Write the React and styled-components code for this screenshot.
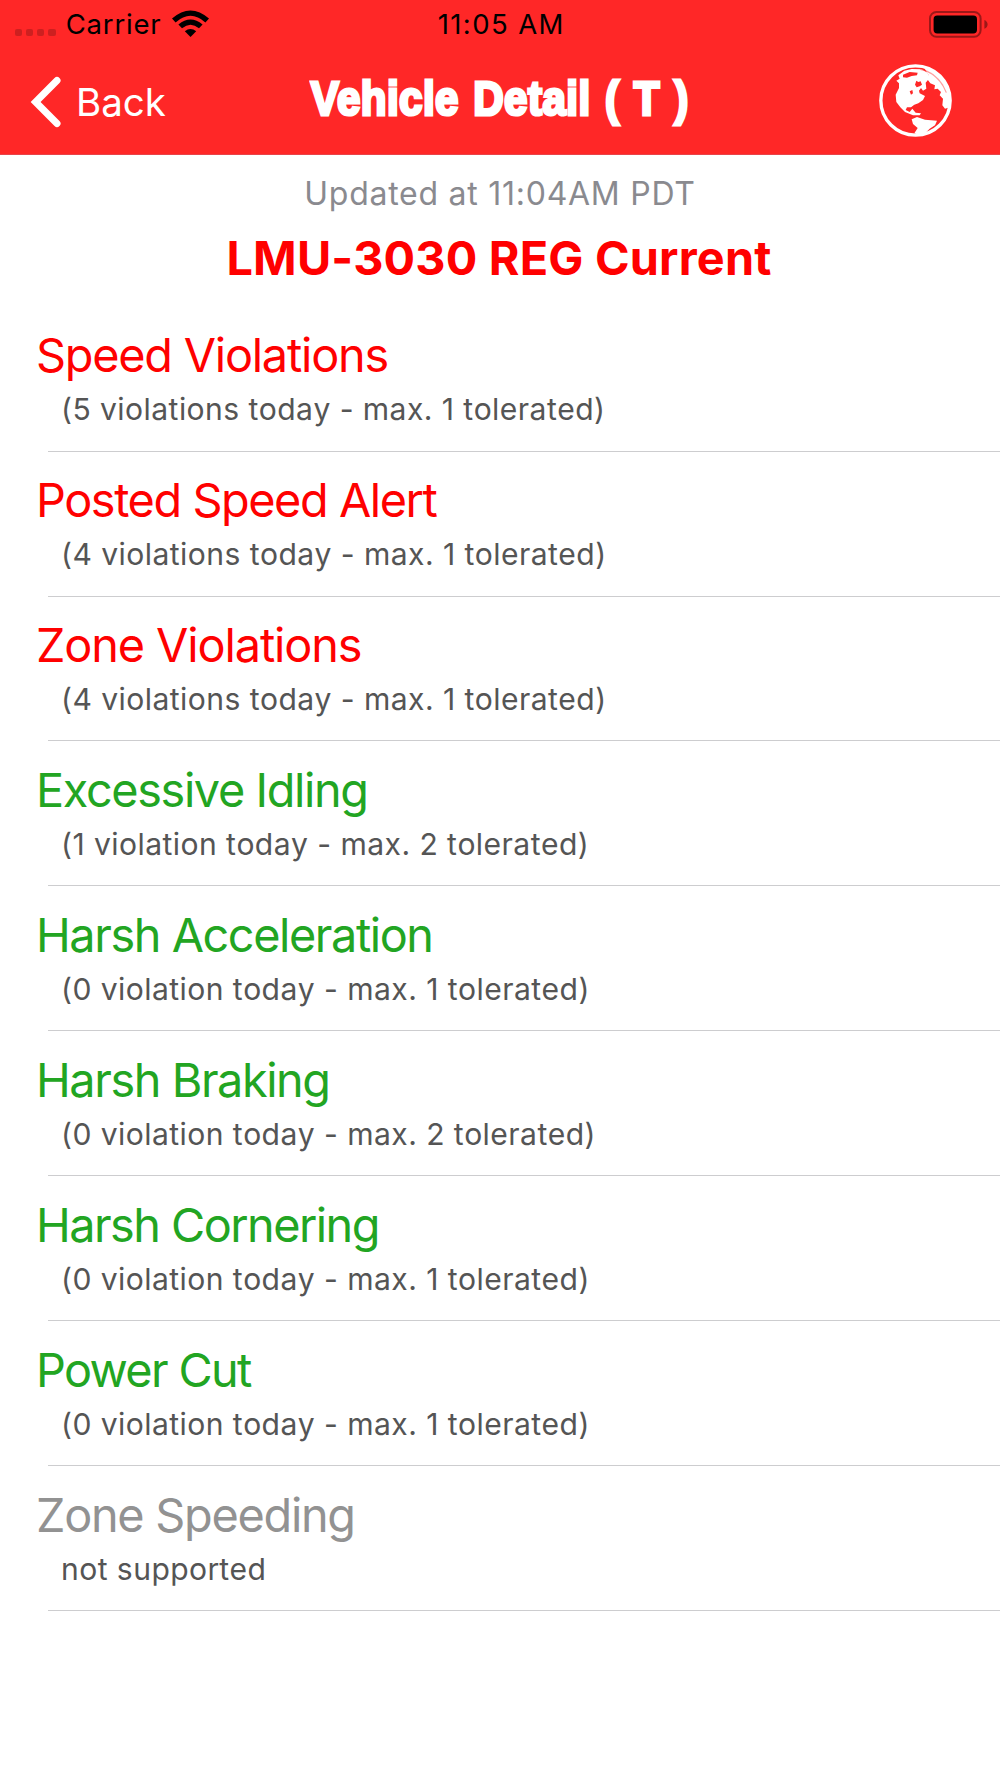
import React from 'react'
import styled, { createGlobalStyle } from 'styled-components'

const GlobalStyle = createGlobalStyle`
  * {
    box-sizing: border-box;
  }
  body {
    margin: 0;
    background: #fff;
    font-family: Inter, 'Liberation Sans', sans-serif;
  }
`
const Screen = styled.div`
  width: 1000px;
  height: 1778px;
  background: #fff;
  overflow: hidden;
`
const Header = styled.header`
  height: 155px;
  background: #ff2727;
  border-bottom: 1px solid #e8444a;
`
const StatusBar = styled.div`
  display: grid;
  grid-template-columns: 1fr auto 1fr;
  align-items: center;
  height: 48px;
  padding: 0 12px 0 14.5px;
  color: #000;
  font-size: 27.5px;
  line-height: 48px;
`
const StatusLeft = styled.div`
  display: flex;
  align-items: center;
`
const Signal = styled.div`
  display: flex;
  gap: 4px;
  margin: 17px 10px 0 0;
`
const SignalDot = styled.span`
  width: 7.3px;
  height: 7px;
  border-radius: 2px;
  background: #cd2020;
`
const Carrier = styled.span`
  letter-spacing: 0.8px;
  margin-right: 11px;
`
const Time = styled.span`
  letter-spacing: 1.4px;
`
const StatusRight = styled.div`
  display: flex;
  justify-content: flex-end;
`
const NavBar = styled.nav`
  display: grid;
  grid-template-columns: 1fr auto 1fr;
  align-items: center;
  height: 106px;
  padding: 0 30px;
  color: #fff;
`
const BackButton = styled.a`
  display: flex;
  align-items: center;
  gap: 13px;
  padding-top: 2px;
  font-size: 38.5px;
  line-height: 50px;
`
const TitleBox = styled.div`
  width: 380px;
  display: flex;
  justify-content: center;
  padding-bottom: 6px;
`
const NavTitle = styled.h1`
  margin: 0;
  font-family: 'Liberation Sans', sans-serif;
  font-size: 48.5px;
  font-weight: 700;
  line-height: 60px;
  letter-spacing: 0.5px;
  word-spacing: 2.6px;
  white-space: nowrap;
  -webkit-text-stroke: 3.2px #fff;
  transform: scaleX(0.868);
`
const GlobeButton = styled.a`
  display: flex;
  justify-content: flex-end;
  padding: 0 18px 1px 0;
`
const Summary = styled.section`
  height: 151px;
  padding-top: 18px;
  text-align: center;
`
const Updated = styled.p`
  margin: 0;
  color: #8a8a8f;
  font-size: 32px;
  line-height: 41px;
  letter-spacing: 0.74px;
`
const VehicleName = styled.h2`
  margin: 15px 0 0;
  color: #ff0000;
  font-size: 46.8px;
  font-weight: 700;
  line-height: 58px;
  letter-spacing: 0.2px;
  padding-right: 2px;
`
const List = styled.ul`
  margin: 0;
  padding: 0;
  list-style: none;
`
const ListItem = styled.li`
  height: 144.95px;
  padding: 22.4px 0 0 36px;
`
const ItemTitle = styled.h3`
  margin: 0;
  color: ${({ $color }) => $color};
  font-size: 46.8px;
  font-weight: 400;
  line-height: 54px;
  letter-spacing: ${({ $spacing }) => $spacing}px;
`
const ItemDetail = styled.p`
  margin: 9px 0 0 25px;
  color: #555;
  font-size: 30.1px;
  font-kerning: none;
  line-height: 36px;
  letter-spacing: 0.43px;
`
const Divider = styled.div`
  height: 1px;
  margin: 23.2px 0 0 12px;
  background: #cdcdcf;
`

const RED = '#ff0000'
const GREEN = '#22a522'
const GRAY = '#929292'

const items = [
  { title: 'Speed Violations', detail: '(5 violations today - max. 1 tolerated)', color: RED, spacing: -1.22 },
  { title: 'Posted Speed Alert', detail: '(4 violations today - max. 1 tolerated)', color: RED, spacing: -1.42 },
  { title: 'Zone Violations', detail: '(4 violations today - max. 1 tolerated)', color: RED, spacing: -1.1 },
  { title: 'Excessive Idling', detail: '(1 violation today - max. 2 tolerated)', color: GREEN, spacing: -1.36 },
  { title: 'Harsh Acceleration', detail: '(0 violation today - max. 1 tolerated)', color: GREEN, spacing: -1.42 },
  { title: 'Harsh Braking', detail: '(0 violation today - max. 2 tolerated)', color: GREEN, spacing: -1.42 },
  { title: 'Harsh Cornering', detail: '(0 violation today - max. 1 tolerated)', color: GREEN, spacing: -1.53 },
  { title: 'Power Cut', detail: '(0 violation today - max. 1 tolerated)', color: GREEN, spacing: -1.65 },
  { title: 'Zone Speeding', detail: 'not supported', color: GRAY, spacing: -1.26 },
]

const WifiIcon = () => (
  <svg width="37" height="28" viewBox="0 0 37 28">
    <path d="M0 8.6 Q18.5 -7.6 37 8.6 L33.4 12.4 Q18.5 -0.8 3.6 12.4 Z" />
    <path d="M6.4 14.6 Q18.5 4.6 30.6 14.6 L27 18.3 Q18.5 11.2 10 18.3 Z" />
    <path d="M12.8 21.2 Q18.5 16.8 24.2 21.2 L18.5 27 Z" />
  </svg>
)

const BatteryIcon = () => (
  <svg width="59" height="27" viewBox="0 0 59 27">
    <rect x="1" y="1" width="50.6" height="24.8" rx="6.5" fill="none" stroke="#9c1818" strokeWidth="2" />
    <rect x="4.6" y="4.6" width="43.4" height="17.8" rx="3.6" />
    <path d="M55.4 9 Q58.6 10.6 58.6 13.4 T55.4 17.8 Z" fill="#9c1818" />
  </svg>
)

const ChevronIcon = () => (
  <svg width="33" height="52" viewBox="0 0 33 52" fill="none" stroke="#fff" strokeWidth="7" strokeLinecap="round" strokeLinejoin="miter">
    <path d="M27 4.5 L5.6 26 L27 47.5" />
  </svg>
)

const GlobeIcon = () => (
  <svg width="73" height="73" viewBox="12 12 219 219" fill="#fff">
    <circle cx="121.5" cy="121.5" r="104" fill="none" stroke="#fff" strokeWidth="10" />
    {/* north america */}
    <path d="M64 62 L74 56 L70 46 L88 32 L110 27 L140 28 L158 38 L162 56 L152 68 L154 86 L144 92 L138 84 L132 92 L134 100 L150 108 L144 120 L130 130 L118 134 L108 142 L96 142 L92 150 L104 156 L112 146 L122 158 L138 160 L134 166 L114 166 L90 156 L76 142 L64 126 L62 104 L72 84 L72 70 Z" />
    <path d="M84 44 L104 36 L128 38 L126 46 L110 48 L96 53 L84 52 Z" fill="#ff2727" />
    <path d="M124 62 L130 66 L137 64 L141 74 L134 79 L125 82 L120 74 Z" fill="#ff2727" />
    <path d="M104 94 L112 90 L114 100 L108 104 Z" fill="#ff2727" />
    {/* south america */}
    <path d="M110 178 L126 171 L150 179 L186 182 L180 196 L164 206 L152 218 L130 224 L118 220 L128 204 L114 192 Z" />
    {/* europe and africa */}
    <path d="M148 24 L176 34 L200 56 L216 82 L226 112 L224 142 L210 146 L202 136 L204 116 L194 106 L198 96 L188 86 L178 88 L180 76 L166 70 L156 56 L160 44 Z" />
    <path d="M136 28 Q176 34 204 76 M166 38 Q200 60 214 98" fill="none" stroke="#ff2727" strokeWidth="3.5" opacity="0.45" />
  </svg>
)

export default function App() {
  return <Screen>
    <GlobalStyle />
    <Header>
      <StatusBar>
        <StatusLeft>
          <Signal>
            {[0, 1, 2, 3].map(i => <SignalDot key={i} />)}
          </Signal>
          <Carrier>Carrier</Carrier>
          <WifiIcon />
        </StatusLeft>
        <Time>11:05 AM</Time>
        <StatusRight>
          <BatteryIcon />
        </StatusRight>
      </StatusBar>
      <NavBar>
        <BackButton>
          <ChevronIcon />
          Back
        </BackButton>
        <TitleBox>
          <NavTitle>Vehicle Detail ( T )</NavTitle>
        </TitleBox>
        <GlobeButton>
          <GlobeIcon />
        </GlobeButton>
      </NavBar>
    </Header>

    <Summary>
      <Updated>Updated at 11:04AM PDT</Updated>
      <VehicleName>LMU-3030 REG Current</VehicleName>
    </Summary>

    <List>
      {items.map(({ title, detail, color, spacing }) => (
        <ListItem key={title}>
          <ItemTitle $color={color} $spacing={spacing}>{title}</ItemTitle>
          <ItemDetail>{detail}</ItemDetail>
          <Divider />
        </ListItem>
      ))}
    </List>
  </Screen>
}
